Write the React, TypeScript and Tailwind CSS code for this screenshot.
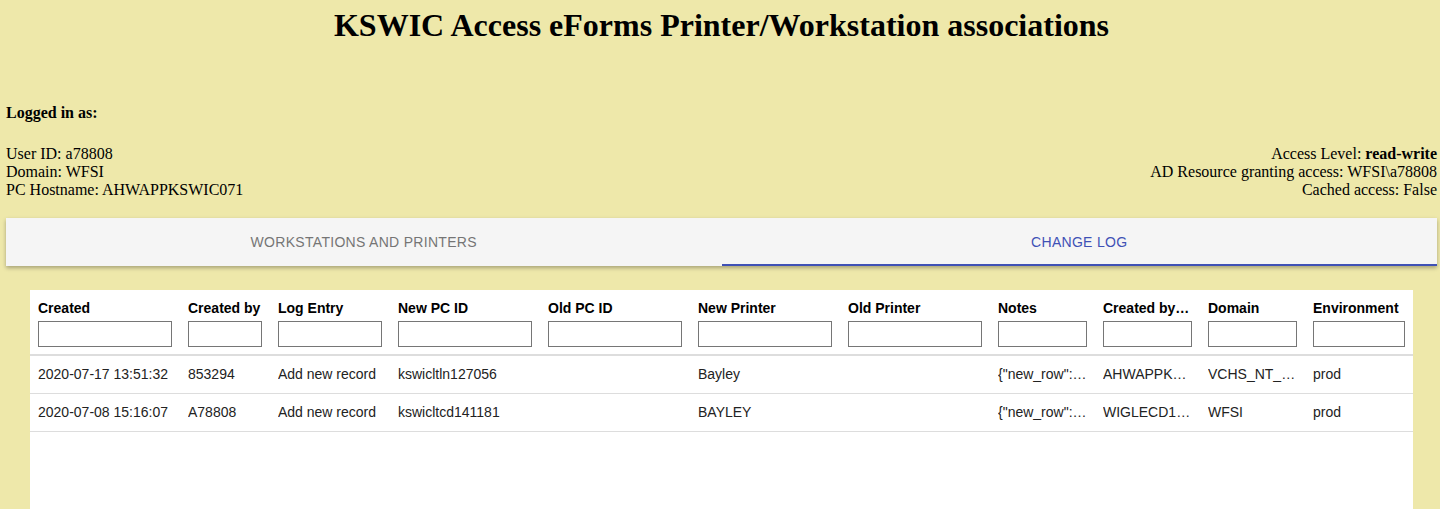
import React from 'react'

type Col = { key: string; label: string; width: string }

const columns: Col[] = [
  { key: 'created', label: 'Created', width: 'w-[150px]' },
  { key: 'createdBy', label: 'Created by', width: 'w-[90px]' },
  { key: 'logEntry', label: 'Log Entry', width: 'w-[120px]' },
  { key: 'newPc', label: 'New PC ID', width: 'w-[150px]' },
  { key: 'oldPc', label: 'Old PC ID', width: 'w-[150px]' },
  { key: 'newPrinter', label: 'New Printer', width: 'w-[150px]' },
  { key: 'oldPrinter', label: 'Old Printer', width: 'w-[150px]' },
  { key: 'notes', label: 'Notes', width: 'w-[105px]' },
  { key: 'createdHost', label: 'Created by host', width: 'w-[105px]' },
  { key: 'domain', label: 'Domain', width: 'w-[105px]' },
  { key: 'env', label: 'Environment', width: 'w-[108px]' }
]

const rows: Record<string, string>[] = [
  {
    created: '2020-07-17 13:51:32',
    createdBy: '853294',
    logEntry: 'Add new record',
    newPc: 'kswicltln127056',
    oldPc: '',
    newPrinter: 'Bayley',
    oldPrinter: '',
    notes: '{"new_row":{"pc_id":"kswicltln127056"}}',
    createdHost: 'AHWAPPKSWIC071',
    domain: 'VCHS_NT_DOMAIN',
    env: 'prod'
  },
  {
    created: '2020-07-08 15:16:07',
    createdBy: 'A78808',
    logEntry: 'Add new record',
    newPc: 'kswicltcd141181',
    oldPc: '',
    newPrinter: 'BAYLEY',
    oldPrinter: '',
    notes: '{"new_row":{"pc_id":"kswicltcd141181"}}',
    createdHost: 'WIGLECD141181',
    domain: 'WFSI',
    env: 'prod'
  }
]

export default function App() {
  return (
    <div className="h-[509px] overflow-hidden bg-[#eee8aa] pl-[6px] pr-[3px] font-['Liberation_Serif',serif] text-black">
      {/* Title */}
      <h1 className="pt-[7px] text-center text-[32px] font-bold leading-[37px]">
        KSWIC Access eForms Printer/Workstation associations
      </h1>

      {/* Session info */}
      <div className="mt-[60px] text-[16px] leading-[18px]">
        <div className="font-bold">Logged in as:</div>
        <div className="mt-[23px] flex justify-between">
          <div>
            <div>User ID: a78808</div>
            <div>Domain: WFSI</div>
            <div>PC Hostname: AHWAPPKSWIC071</div>
          </div>
          <div className="text-right">
            <div>
              Access Level: <span className="font-bold">read-write</span>
            </div>
            <div>AD Resource granting access: WFSI\a78808</div>
            <div>Cached access: False</div>
          </div>
        </div>
      </div>

      {/* Tabs */}
      <div className="mt-[19px] flex h-[48px] bg-[#f5f5f5] shadow-[0_2px_4px_rgba(0,0,0,0.3)] font-['Liberation_Sans',Arial,sans-serif] text-[14px] tracking-[0.3px]">
        <div className="flex flex-1 items-center justify-center text-[#757575]">WORKSTATIONS AND PRINTERS</div>
        <div className="flex flex-1 items-center justify-center border-b-2 border-[#3f51b5] pt-[2px] text-[#3f51b5]">
          CHANGE LOG
        </div>
      </div>

      {/* Change log table */}
      <div className="mx-[24px] mt-[24px] h-[219px] overflow-hidden bg-white font-['Liberation_Sans',Arial,sans-serif] text-[14px] text-[#222]">
        <div className="flex border-b-2 border-[#ddd]">
          {columns.map((c) => (
            <div key={c.key} className={`${c.width} shrink-0 overflow-hidden px-[8px] pt-[9px] pb-[7px]`}>
              <div className="truncate font-bold leading-[18px] text-black">{c.label}</div>
              <input className="mt-[4px] block h-[26px] w-full border border-[#767676] bg-white" />
            </div>
          ))}
        </div>
        {rows.map((r, i) => (
          <div key={i} className="flex h-[38px] items-center border-b border-[#ddd]">
            {columns.map((c) => (
              <div key={c.key} className={`${c.width} shrink-0 overflow-hidden px-[8px]`}>
                <div className="truncate">{r[c.key]}</div>
              </div>
            ))}
          </div>
        ))}
      </div>
    </div>
  )
}
